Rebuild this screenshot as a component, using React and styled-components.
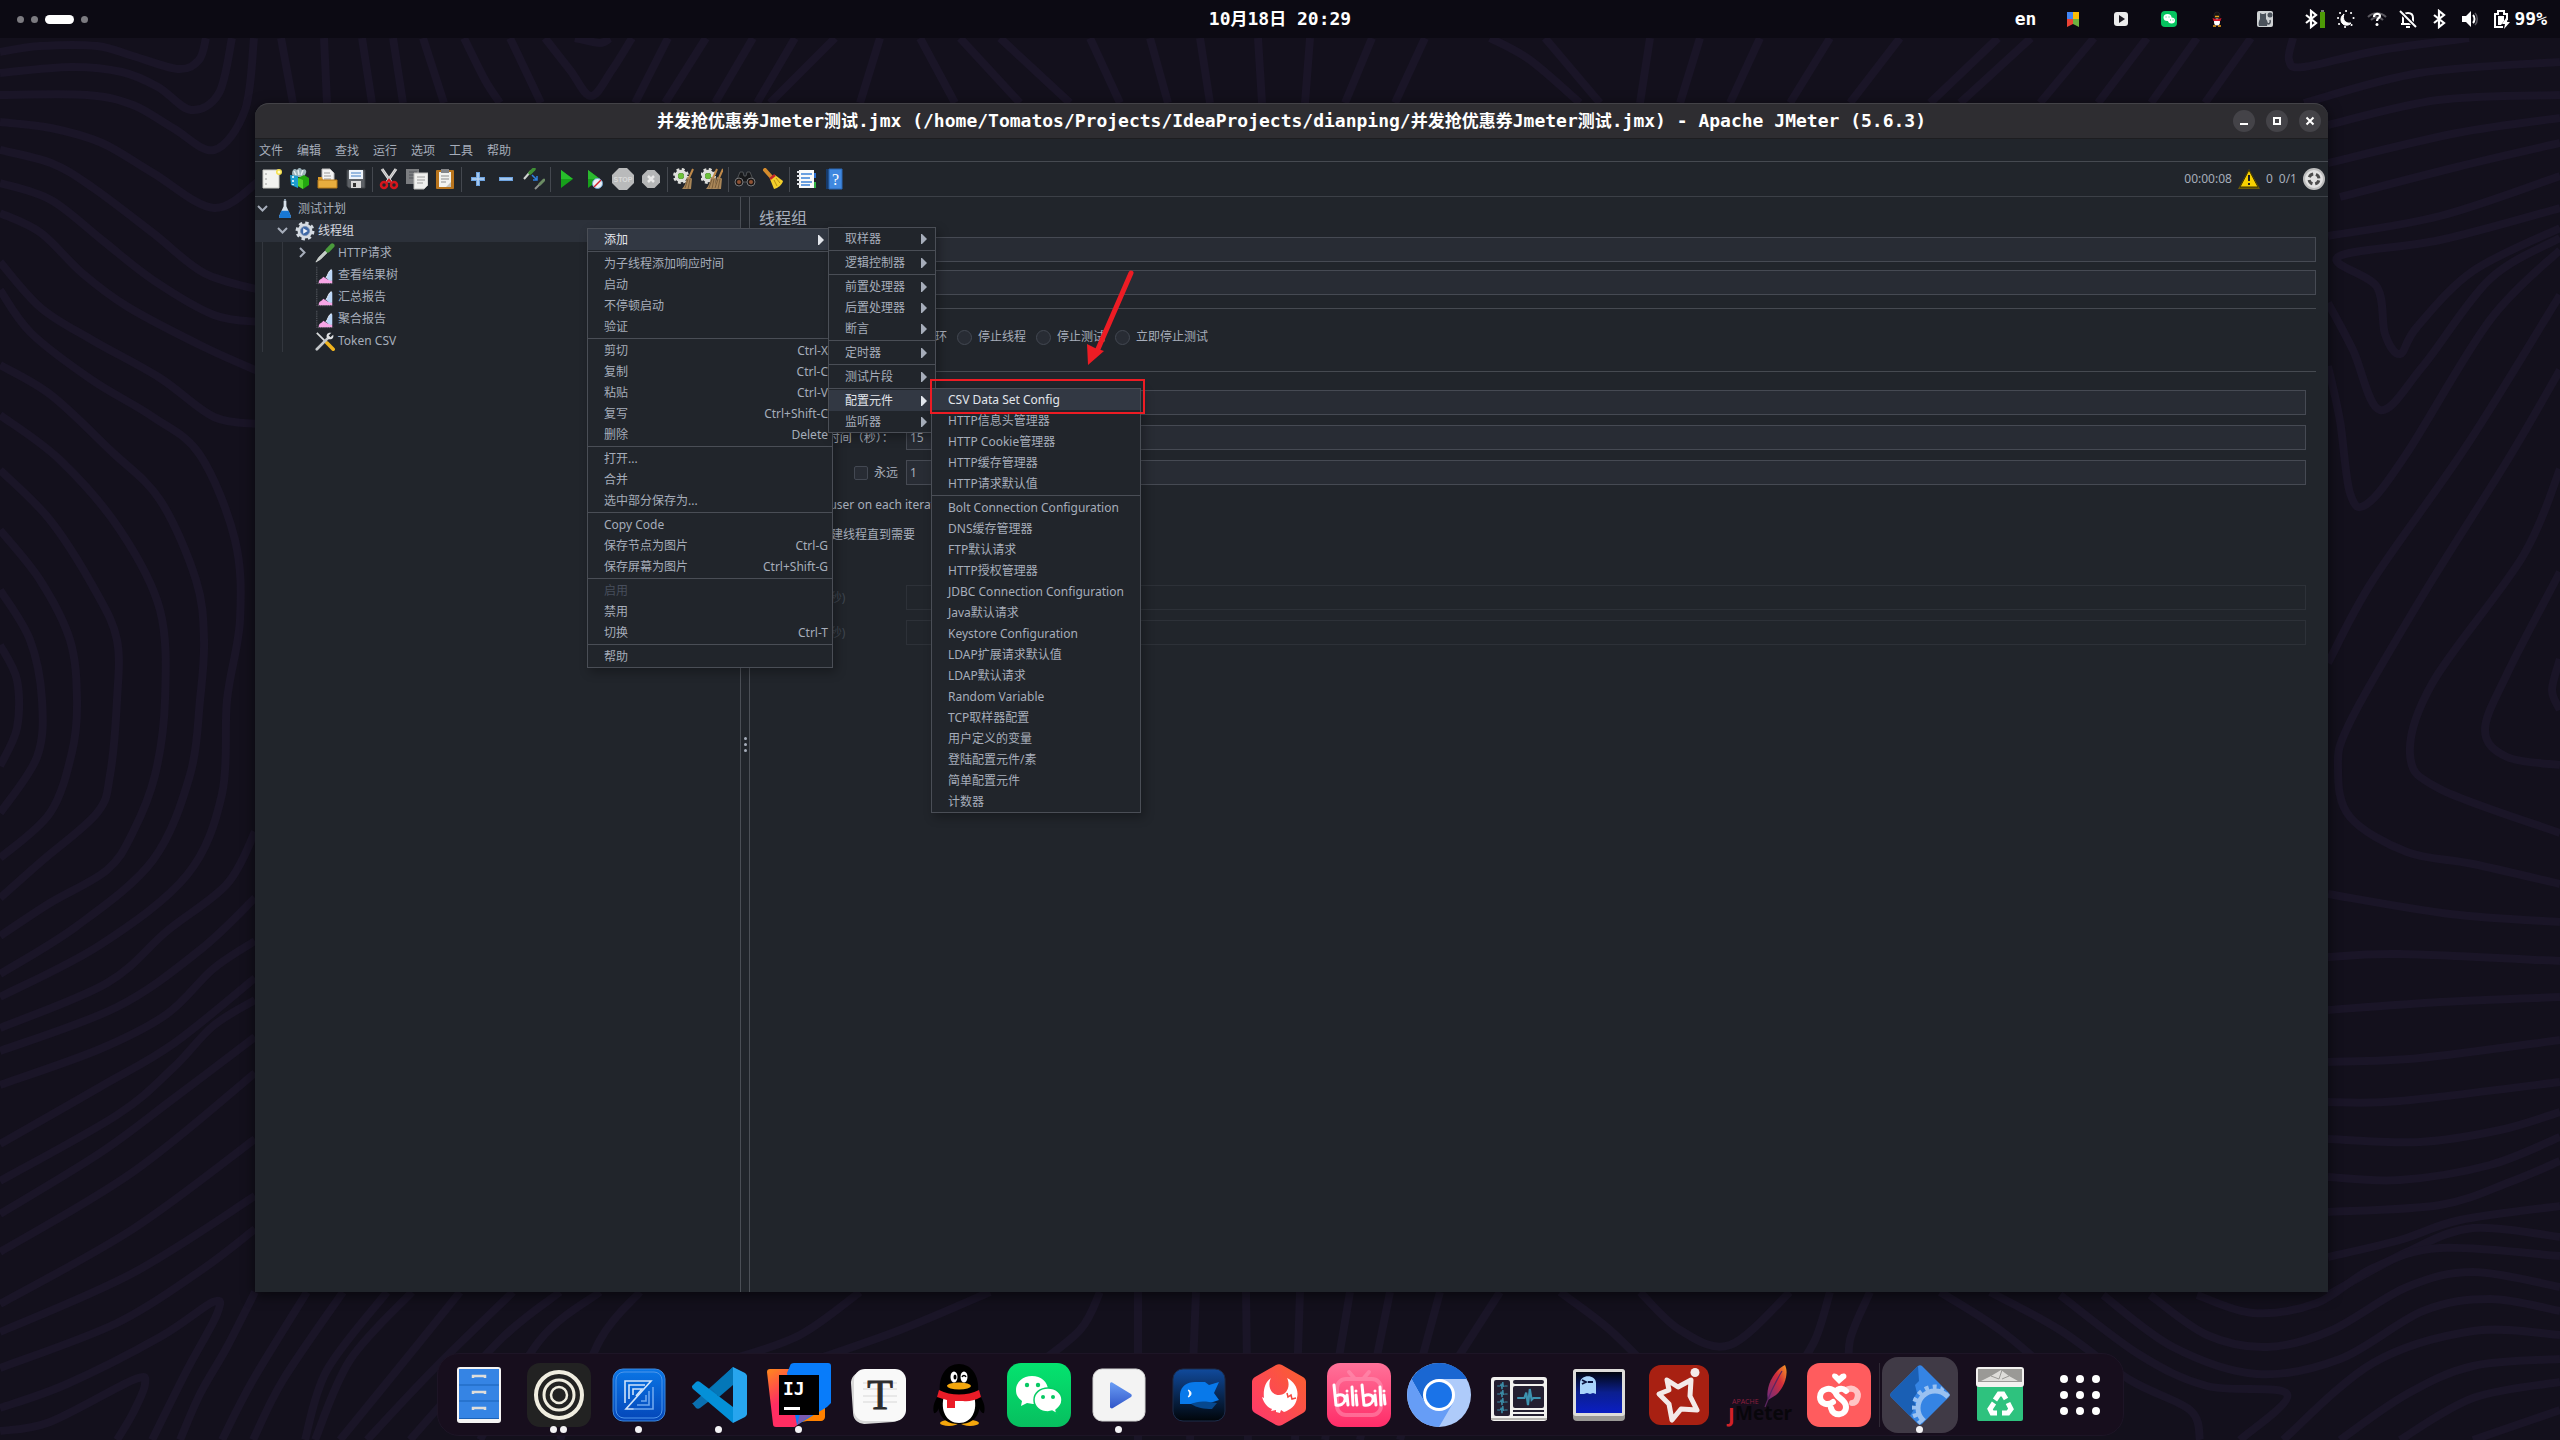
import React from 'react';
import styled, { createGlobalStyle, css } from 'styled-components';

const GlobalStyle = createGlobalStyle`
  * {
    box-sizing: border-box;
  }

  body {
    margin: 0;
    background: #13101c;
    color: #a6adba;
    font-family: "Noto Sans", "Noto Sans CJK SC", sans-serif;
    font-size: 12px;
    line-height: 20px;
  }

  ul {
    list-style: none;
    margin: 0;
    padding: 0;
  }

  button {
    font: inherit;
    color: inherit;
    background: none;
    border: none;
    padding: 0;
  }
`;

const mono = css`
  font-family: "DejaVu Sans Mono", "Noto Sans CJK SC", monospace;
  font-size: 18px;
  font-weight: bold;
  color: #fff;
`;

/* ---------- desktop ---------- */

const Desktop = styled.div`
  position: relative;
  display: flex;
  flex-direction: column;
  min-height: 100vh;
`;

const Wallpaper = styled.svg`
  position: absolute;
  inset: 0;
  width: 100%;
  height: 100%;
  z-index: -1;
`;

const waves = [
  [0, 52, 40, 46, 97, 46, 133, 56, 178, 69, 199, 60, 206, 38],
  [0, 73, 71, 67, 122, 72, 158, 87, 191, 110, 219, 93, 232, 38],
  [0, 95, 87, 95, 133, 105, 173, 128, 214, 150, 245, 110, 254, 38],
  [0, 122, 51, 128, 102, 143, 153, 173, 214, 208, 260, 180],
  [0, 150, 51, 163, 92, 187, 153, 233, 204, 273, 260, 290],
  [0, 183, 51, 200, 102, 240, 153, 280, 214, 315, 260, 322],
  [0, 213, 41, 233, 82, 273, 128, 307, 204, 347, 260, 372],
  [0, 262, 41, 308, 92, 340, 160, 378, 214, 417, 260, 424],
  [0, 290, 31, 333, 92, 380, 153, 417, 200, 455, 235, 540, 240, 620, 227, 700, 222, 794, 187, 875, 100, 945, 0, 997],
  [0, 365, 51, 395, 110, 450, 160, 500, 196, 580, 204, 640, 200, 700, 190, 775, 153, 860, 77, 926, 0, 974],
  [0, 415, 60, 460, 120, 530, 160, 610, 165, 700, 155, 775, 133, 832, 107, 870, 50, 903, 0, 936],
  [0, 470, 50, 520, 95, 590, 117, 640, 117, 700, 110, 775, 97, 813, 43, 860, 0, 898],
  [0, 530, 40, 580, 70, 640, 77, 700, 72, 752, 50, 813, 0, 858],
  [0, 590, 30, 640, 42, 700, 37, 757, 0, 813],
  [0, 645, 17, 680, 17, 728, 0, 766],
  [255, 832, 227, 884, 167, 931, 107, 983, 0, 1028],
  [255, 898, 200, 950, 117, 1007, 0, 1051],
  [255, 941, 213, 969, 167, 1014, 100, 1049, 0, 1085],
  [255, 978, 173, 1044, 100, 1087, 0, 1144],
  [255, 1000, 213, 1026, 173, 1068, 117, 1115, 0, 1181],
  [255, 1037, 173, 1099, 100, 1153, 0, 1214],
  [255, 1073, 133, 1172, 0, 1252],
  [255, 1139, 133, 1229, 0, 1304],
  [255, 1196, 133, 1273, 0, 1332],
  [255, 1229, 200, 1271, 117, 1323, 0, 1368],
  [0, 1408, 67, 1384, 160, 1337, 213, 1302, 217, 1314, 187, 1370, 152, 1440],
  [0, 1431, 50, 1422, 133, 1380, 145, 1384, 133, 1413, 117, 1440],
  [255, 1292, 227, 1347, 200, 1394, 180, 1440],
  [307, 1292, 253, 1380, 222, 1440],
  [343, 1292, 283, 1380, 253, 1440],
  [387, 1292, 327, 1370, 305, 1440],
  [412, 1292, 350, 1360, 315, 1440],
  [460, 1292, 393, 1375, 340, 1440],
  [513, 1292, 433, 1370, 367, 1440],
  [560, 1292, 500, 1340, 410, 1440],
  [600, 1292, 540, 1340, 480, 1440],
  [640, 1292, 600, 1340, 560, 1440],
  [860, 1292, 800, 1335, 730, 1360],
  [990, 1292, 900, 1330, 800, 1365],
  [1100, 1292, 1080, 1330, 1030, 1370],
  [1138, 1292, 1138, 1440],
  [1196, 1292, 1190, 1440],
  [1246, 1292, 1248, 1440],
  [1300, 1292, 1295, 1440],
  [1350, 1292, 1325, 1440],
  [1390, 1292, 1360, 1440],
  [1440, 1292, 1400, 1440],
  [1500, 1292, 1450, 1370],
  [1560, 1292, 1610, 1330, 1660, 1380],
  [1640, 1292, 1680, 1330, 1730, 1345, 1790, 1292],
  [1830, 1292, 1815, 1340, 1790, 1380],
  [1870, 1292, 1850, 1340, 1850, 1380],
  [1940, 1292, 2000, 1330, 2060, 1380],
  [1990, 1292, 2060, 1330, 2130, 1380, 2190, 1410, 2200, 1440],
  [2328, 236, 2440, 216, 2560, 176],
  [2560, 208, 2440, 240, 2338, 257, 2377, 287, 2385, 334, 2400, 354, 2417, 327, 2473, 271, 2560, 228],
  [2328, 303, 2353, 350, 2380, 410, 2423, 366, 2490, 279, 2560, 238],
  [2328, 366, 2340, 421, 2350, 493, 2367, 504, 2407, 453, 2490, 320, 2560, 250],
  [2328, 663, 2373, 580, 2467, 445, 2560, 295],
  [2560, 370, 2507, 461, 2423, 595, 2350, 722, 2338, 769, 2350, 817, 2407, 852, 2473, 864, 2560, 884],
  [2560, 469, 2523, 556, 2433, 682, 2410, 754, 2440, 789, 2560, 833],
  [2560, 572, 2507, 674, 2485, 730, 2507, 757, 2560, 765],
  [2560, 659, 2552, 690, 2560, 710],
  [2328, 894, 2450, 914, 2560, 922],
  [2328, 957, 2400, 954, 2560, 961],
  [2328, 1010, 2440, 1002, 2560, 997],
  [2328, 1062, 2420, 1058, 2560, 1040],
  [2328, 1102, 2400, 1101, 2560, 1082],
  [2328, 1139, 2420, 1142, 2500, 1130, 2560, 1112],
  [2328, 1177, 2400, 1180, 2490, 1165, 2560, 1137],
  [2328, 1212, 2440, 1205, 2510, 1182, 2560, 1161],
  [2328, 1257, 2400, 1240, 2460, 1220, 2560, 1206],
  [2328, 1295, 2407, 1252, 2473, 1228, 2560, 1237],
  [2197, 1295, 2253, 1313, 2317, 1303, 2373, 1268, 2440, 1248, 2560, 1256],
  [2150, 1295, 2207, 1335, 2267, 1347, 2330, 1331, 2407, 1287, 2473, 1272, 2560, 1287],
  [2103, 1295, 2173, 1347, 2257, 1374, 2340, 1359, 2423, 1311, 2490, 1299, 2560, 1311],
  [2060, 1295, 2140, 1355, 2207, 1386, 2287, 1394, 2240, 1440],
  [2283, 1440, 2373, 1363, 2473, 1331, 2560, 1335],
  [2340, 1440, 2407, 1394, 2473, 1366, 2560, 1359],
  [2400, 1440, 2473, 1398, 2560, 1382],
  [2473, 1440, 2560, 1410],
  [2293, 38, 2289, 60, 2304, 67, 2381, 50, 2469, 38],
  [2304, 103, 2419, 73, 2560, 62],
  [2328, 125, 2438, 100, 2560, 95],
  [2328, 163, 2457, 133, 2560, 118],
  [2340, 197, 2457, 167, 2560, 143],
  [281, 38, 293, 103], [324, 38, 327, 103], [362, 38, 372, 103], [393, 38, 403, 103],
  [423, 38, 444, 103], [464, 38, 485, 80, 500, 103], [510, 38, 541, 103],
  [545, 38, 570, 70, 591, 96, 612, 70, 632, 38],
  [575, 38, 600, 43, 610, 38],
  [668, 38, 635, 103], [706, 38, 665, 103], [753, 38, 715, 103], [795, 38, 757, 103],
  [835, 38, 770, 103], [880, 38, 860, 103], [920, 38, 955, 103], [960, 38, 1020, 103],
  [1000, 38, 1070, 103], [1090, 38, 1120, 103], [1150, 38, 1168, 103], [1200, 38, 1210, 103],
  [1258, 38, 1262, 103], [1310, 38, 1305, 103], [1372, 38, 1345, 103], [1425, 38, 1395, 103],
  [1490, 38, 1530, 60, 1580, 103], [1545, 38, 1600, 103], [1650, 38, 1640, 103],
  [1700, 38, 1680, 103], [1760, 38, 1730, 103], [1830, 38, 1790, 103], [1900, 38, 1850, 103],
  [1998, 38, 1930, 103], [2031, 38, 1960, 103], [2094, 38, 2040, 103], [2147, 38, 2098, 103],
  [2197, 38, 2151, 103], [2251, 38, 2205, 103],
];

const smooth = (flat) => {
  const pts = [];
  for (let i = 0; i < flat.length; i += 2) pts.push([flat[i], flat[i + 1]]);
  let d = `M${pts[0]}`;
  for (let i = 0; i < pts.length - 1; i += 1) {
    const a = pts[i - 1] || pts[i];
    const b = pts[i];
    const c = pts[i + 1];
    const e = pts[i + 2] || c;
    d += `C${b[0] + (c[0] - a[0]) / 6} ${b[1] + (c[1] - a[1]) / 6} ${c[0] - (e[0] - b[0]) / 6} ${c[1] - (e[1] - b[1]) / 6} ${c}`;
  }
  return d;
};

/* ---------- top bar ---------- */

const TopBar = styled.header`
  ${mono}
  display: grid;
  grid-template-columns: 1fr auto 1fr;
  align-items: center;
  height: 38px;
  background: #0c0a13;
`;

const Workspaces = styled.div`
  display: flex;
  align-items: center;
  gap: 7px;
  padding-left: 17px;
`;

const Workspace = styled.button`
  width: ${props => (props.$active ? 29 : 7)}px;
  height: ${props => (props.$active ? 9 : 7)}px;
  border-radius: 5px;
  background: ${props => (props.$active ? '#fff' : '#7c7b80')};
`;

const Tray = styled.div`
  display: flex;
  align-items: center;
  justify-content: flex-end;
  padding-right: 13px;
`;

const TrayCell = styled.button`
  display: flex;
  align-items: center;
  justify-content: center;
  width: ${props => (props.$wide ? 48 : 31)}px;
  height: 38px;

  svg {
    display: block;
  }
`;

const TrayGroup = styled.div`
  display: flex;
  margin-left: 10px;
`;

const Battery = styled.div`
  display: flex;
  align-items: center;
  gap: 3px;
  margin-left: 8px;
`;

/* ---------- window ---------- */

const Window = styled.main`
  position: relative;
  flex: 1;
  display: flex;
  flex-direction: column;
  margin: 65px 232px 61px 255px;
  background: #21252b;
  border-radius: 14px 14px 0 0;
  box-shadow: 0 3px 14px rgba(0, 0, 0, 0.6);
`;

const TitleBar = styled.div`
  display: grid;
  grid-template-columns: 1fr auto 1fr;
  align-items: center;
  height: 36px;
  background: #2e2d31;
  border-top: 1px solid #434247;
  border-bottom: 1px solid #1d1d20;
  border-radius: 14px 14px 0 0;
`;

const Title = styled.h1`
  ${mono}
  grid-column: 2;
  margin: 0;
  line-height: 24px;
  white-space: pre;
`;

const Han = styled.span`
  font-size: 17px;
`;

const WindowButtons = styled.div`
  display: flex;
  justify-content: flex-end;
  gap: 11px;
  padding-right: 7px;
`;

const RoundButton = styled.button`
  width: 22px;
  height: 22px;
  border-radius: 50%;
  background: #444348;

  svg {
    display: block;
  }
`;

const MenuBar = styled.nav`
  display: flex;
  gap: 14px;
  height: 23px;
  padding: 1px 4px 0;
  border-bottom: 1px solid #464a51;
`;

const ToolBar = styled.div`
  display: flex;
  align-items: center;
  height: 35px;
  padding: 0 3px;
  border-bottom: 1px solid #3c4047;
`;

const ToolButton = styled.button`
  display: flex;
  justify-content: center;
  width: 28px;

  svg {
    display: block;
  }
`;

const ToolSeparator = styled.span`
  width: 1px;
  height: 25px;
  margin: 0 2px;
  background: #44484f;
`;

const Counters = styled.div`
  display: flex;
  align-items: center;
  gap: 6px;
  margin-left: auto;

  svg {
    display: block;
  }
`;

const Body = styled.div`
  flex: 1;
  display: flex;
`;

/* ---------- tree ---------- */

const Tree = styled.ul`
  flex: 0 0 486px;
  padding-top: 1px;
  border-right: 1px solid #4a4e55;
`;

const TreeRow = styled.div`
  display: flex;
  align-items: center;
  height: 22px;
  padding-left: ${props => props.$level * 20}px;
  background: ${props => (props.$selected ? '#2c313a' : 'none')};
  color: ${props => (props.$selected ? '#d7dae0' : 'inherit')};

  > svg {
    margin-right: 3px;
  }
`;

const Toggle = styled.button`
  width: 20px;
  height: 20px;

  svg {
    display: block;
  }
`;

const Branch = styled.ul`
  background: linear-gradient(#33373e, #33373e) ${props => props.$level * 20 + 7}px 0 / 1px 100% no-repeat;
`;

const Splitter = styled.div`
  display: flex;
  flex-direction: column;
  align-items: center;
  justify-content: center;
  gap: 3px;
  width: 8px;
`;

const Grip = styled.span`
  width: 3px;
  height: 3px;
  border-radius: 50%;
  background: #a6adba;
`;

/* ---------- form ---------- */

const Pane = styled.section`
  flex: 1;
  padding: 9px 12px 0 9px;
  border-left: 1px solid #4a4e55;
`;

const PaneTitle = styled.h2`
  margin: 0 0 7px;
  font-size: 16px;
  font-weight: normal;
  line-height: 24px;
`;

const Group = styled.section`
  margin-top: ${props => (props.$first ? 13 : 0)}px;
  padding: 18px 10px ${props => (props.$first ? 24 : 18)}px 16px;
  border-top: 1px solid #464a51;
`;

const Rows = styled.div`
  display: flex;
  flex-direction: column;
  gap: ${props => (props.$tight ? 8 : 10)}px;
`;

const Row = styled.div`
  display: flex;
  align-items: center;
  gap: 8px;
`;

const FieldLabel = styled.label`
  flex: 0 0 ${props => (props.$short ? 40 : 123)}px;
  white-space: nowrap;
  color: ${props => (props.$disabled ? '#3f4550' : 'inherit')};
`;

const LoopLabel = styled.div`
  flex: 0 0 123px;
  display: flex;
  justify-content: space-between;
`;

const Field = styled.input`
  flex: 1;
  height: 25px;
  padding: 0 3px;
  font: inherit;
  color: inherit;
  background: #282c34;
  border: 1px solid #464a53;
  outline: none;

  &:disabled {
    background: #21252b;
    border-color: #2d3138;
  }
`;

const Choices = styled.div`
  display: flex;
  gap: 10px;
`;

const Choice = styled.label`
  display: flex;
  align-items: center;
  gap: 6px;
  height: 20px;
  white-space: nowrap;
`;

const Mark = styled.input`
  appearance: none;
  width: ${props => (props.type === 'radio' ? 15 : 14)}px;
  height: ${props => (props.type === 'radio' ? 15 : 14)}px;
  margin: 0;
  background: #282c34;
  border: 1px solid #434852;
  border-radius: ${props => (props.type === 'radio' ? '50%' : '2px')};
`;

/* ---------- menus ---------- */

const MenuList = styled.ul`
  position: absolute;
  z-index: 2;
  left: ${props => (props.$root ? '332px' : 'calc(100% - 4px)')};
  top: ${props => (props.$root ? '125px' : '-2px')};
  width: ${props => props.$width}px;
  background: #21252b;
  border: 1px solid #4a4e56;
  box-shadow: 3px 4px 10px rgba(0, 0, 0, 0.3);
`;

const MenuItem = styled.li`
  position: relative;
`;

const MenuButton = styled.button`
  display: flex;
  align-items: center;
  justify-content: space-between;
  width: 100%;
  height: 21px;
  padding: 0 ${props => (props.$submenu ? 8 : 4)}px 0 16px;
  white-space: nowrap;
  background: ${props => (props.$active ? '#323843' : 'none')};
  color: ${props => (props.$active ? '#e3e6ec' : '#a6adba')};

  &:disabled {
    color: #474e5c;
  }
`;

const MenuLine = styled.li`
  height: 3px;
  padding: 1px 0;
  background: #4a4e56 content-box;
`;

const Annotation = styled.svg`
  position: absolute;
  z-index: 3;
  left: 670px;
  top: 165px;
  pointer-events: none;
`;

/* ---------- dock ---------- */

const DockBar = styled.nav`
  align-self: center;
  display: flex;
  align-items: center;
  height: 83px;
  margin-bottom: 4px;
  padding: 0 3px 0 1px;
  background: #170e1d;
  border: 1px solid #1d1526;
  border-radius: 22px;
`;

const DockButton = styled.button`
  position: relative;
  display: flex;
  align-items: center;
  justify-content: center;
  width: 76px;
  height: 76px;
  margin: 0 2px;
  border-radius: 16px;
  background: ${props => (props.$active ? '#403a46' : 'none')};

  svg {
    display: block;
    overflow: visible;
  }
`;

const DockSeparator = styled.span`
  width: 1px;
  height: 64px;
  background: #2f2835;
`;

const Dots = styled.span`
  position: absolute;
  left: 0;
  right: 0;
  bottom: 0;
  display: flex;
  justify-content: center;
  gap: 3px;
`;

const Dot = styled.span`
  width: 7px;
  height: 7px;
  border-radius: 50%;
  background: #f4f3f5;
`;

/* ---------- icons ---------- */

const Icon = ({ size = 22, children }) => (
  <svg width={size} height={size} viewBox="0 0 22 22" fill="none" aria-hidden="true">{children}</svg>
);

const Gear = ({ cx, cy, r, fill }) => (
  <g>
    <circle cx={cx} cy={cy} r={r} stroke={fill} strokeWidth={r * 0.45} strokeDasharray={`${r * 0.42} ${r * 0.365}`} />
    <circle cx={cx} cy={cy} r={r * 0.72} stroke={fill} strokeWidth={r * 0.5} />
  </g>
);

const Broom = ({ x }) => (
  <g transform={`translate(${x} 0)`}>
    <path d="M19 1l-4 9" stroke="#c08a4a" strokeWidth="2" />
    <path d="M13 9l5 1.500-1 10.500h-9c3-3 4-7 5-12z" fill="#a98658" />
    <path d="M14 11l-3 9M16 11l-2 10" stroke="#6f5433" strokeWidth=".8" />
  </g>
);

const toolIcons = {
  '新建': (
    <Icon>
      <path d="M2 2h16v18H2z" fill="#f3f3f0" stroke="#c9c9c4" />
      <path d="M5 6v.1M5 11v.1M5 16v.1" stroke="#888" strokeWidth="1.500" strokeLinecap="round" />
      <circle cx="18" cy="4" r="3" fill="#f5e04d" />
      <circle cx="18" cy="4" r="1.500" fill="#fffbd0" />
    </Icon>
  ),
  '模板': (
    <Icon>
      <path d="M3 6c0-5 3-6 5-4 2-3 4-2 5 0 3-2 5 0 4 3l-2 4H4z" fill="#9eb4bc" />
      <path d="M5 3l2 4M9 2l1 5M14 2l-2 5" stroke="#e4edf0" strokeWidth="1.500" />
      <path d="M1 7l8 1v12l-7-3z" fill="#1e9ed1" />
      <path d="M4 8v9" stroke="#fff" strokeWidth="1.500" strokeDasharray="2 2" />
      <path d="M9 10l6-3 5 3v7l-6 4-5-3z" fill="#22a80f" />
      <path d="M9 10l5 2v9l-5-3z" fill="#51d02c" />
    </Icon>
  ),
  '打开': (
    <Icon>
      <path d="M5 1h8l4 4v9H5z" fill="#f4f4f4" stroke="#bbb" />
      <path d="M7 5h6M7 8h7M7 11h7" stroke="#999" />
      <path d="M1 9h4l1 3h14v8H1z" fill="#d9992a" />
      <path d="M1 12h19v8H1z" fill="#e8ad3e" stroke="#b87b18" />
    </Icon>
  ),
  '保存': (
    <Icon>
      <path d="M2 2h18v18H4l-2-2z" fill="#5d6166" stroke="#3d4045" />
      <path d="M4 2h14v9H4z" fill="#eef4fb" />
      <path d="M6 5h10M6 8h10" stroke="#7ba5d8" strokeWidth="1.500" />
      <path d="M6 13h10v7H6z" fill="#d9d9d9" />
      <path d="M8 15h3v4H8z" fill="#333" />
    </Icon>
  ),
  '剪切': (
    <Icon>
      <path d="M4 1l9 13M18 1L9 14" stroke="#dedede" strokeWidth="3" />
      <path d="M4 1l9 13M18 1L9 14" stroke="#a4a4a4" strokeWidth=".7" />
      <circle cx="6" cy="17" r="3" stroke="#d4161c" strokeWidth="2.500" />
      <circle cx="16" cy="17" r="3" stroke="#d4161c" strokeWidth="2.500" />
      <path d="M9 14l2-2 2 2" stroke="#d4161c" strokeWidth="2" />
    </Icon>
  ),
  '复制': (
    <Icon>
      <path d="M0 1h13v15H0z" fill="#7b7d80" />
      <path d="M3 4h8M3 7h5M3 10h5" stroke="#55575a" />
      <path d="M8 5h14v12l-4 4H8z" fill="#f0f0ee" stroke="#bdbdbb" />
      <path d="M11 9h8M11 12h8M11 15h6" stroke="#9c9c9c" />
    </Icon>
  ),
  '粘贴': (
    <Icon>
      <rect x="2" y="2" width="18" height="19" rx="1" fill="#b8741d" />
      <path d="M5 4h12v15H5z" fill="#f2f2ef" />
      <path d="M7 1h8v4H7z" fill="#84868a" />
      <path d="M7 8h8M7 11h8M7 14h5" stroke="#8d8d8d" />
      <path d="M12 19l5-5v5z" fill="#c4c4c0" />
    </Icon>
  ),
  '展开': <Icon><path d="M11 4v14M4 11h14" stroke="#6ea3e0" strokeWidth="4" /><path d="M11 5v12M5 11h12" stroke="#b7d3f2" strokeWidth="1.500" /></Icon>,
  '收起': <Icon><path d="M4 11h14" stroke="#6ea3e0" strokeWidth="4" /><path d="M5 11h12" stroke="#b7d3f2" strokeWidth="1.500" /></Icon>,
  '切换': (
    <Icon>
      <path d="M1 11l7-8" stroke="#cfd3cf" strokeWidth="2" />
      <path d="M7 5l4-4" stroke="#3f8f35" strokeWidth="3.500" strokeLinecap="round" />
      <path d="M9 7l5 5M14 8v4h-4" stroke="#2f7fe0" strokeWidth="1.500" />
      <path d="M12 21l5-5" stroke="#8e928e" strokeWidth="2" />
      <path d="M17 16l4-4" stroke="#6c8c64" strokeWidth="3" strokeLinecap="round" />
    </Icon>
  ),
  '启动': <Icon><path d="M5 2l12 9-12 9z" fill="#17a01b" /><path d="M5 2l12 9H5z" fill="#27bf2b" /></Icon>,
  '不停顿启动': (
    <Icon>
      <path d="M4 2l12 9-12 9z" fill="#17a01b" />
      <path d="M4 2l12 9H4z" fill="#2bb92f" />
      <circle cx="13.500" cy="15.500" r="5" fill="#e9f0f6" stroke="#6fa3cf" />
      <path d="M10 19l7-7" stroke="#d2232a" strokeWidth="1.500" />
    </Icon>
  ),
  '停止': (
    <Icon>
      <path d="M7 0h8l7 7v8l-7 7H7l-7-7V7z" fill="#b9babb" />
      <text x="11" y="14" textAnchor="middle" fontSize="7" fontWeight="bold" fontFamily="Liberation Sans" fill="#dadada">STOP</text>
    </Icon>
  ),
  '关闭': (
    <Icon>
      <path d="M7.500 2h7L20 7.500v7L14.500 20h-7L2 14.500v-7z" fill="#b5b6b7" />
      <path d="M8 8l6 6M14 8l-6 6" stroke="#e8e8e8" strokeWidth="2.500" />
    </Icon>
  ),
  '清除': <Icon><Gear cx={8} cy={8} r={6.5} fill="#dedfdc" /><circle cx="8" cy="8" r="3" fill="#6cc13b" /><Broom x={1} /></Icon>,
  '清除全部': <Icon><Gear cx={7} cy={8} r={6.5} fill="#dedfdc" /><circle cx="7" cy="8" r="3" fill="#6cc13b" /><Broom x={-3} /><Broom x={3} /></Icon>,
  '搜索': (
    <Icon>
      <path d="M6 4h3l1 4h2l1-4h3l4 10H2z" fill="#17181a" stroke="#5c5e61" strokeWidth=".8" />
      <circle cx="5" cy="14" r="4" fill="#1c1715" stroke="#77797c" />
      <circle cx="17" cy="14" r="4" fill="#1c1715" stroke="#77797c" />
      <circle cx="5" cy="14" r="2" fill="#8f5234" />
      <circle cx="17" cy="14" r="2" fill="#8f5234" />
    </Icon>
  ),
  '重置搜索': (
    <Icon>
      <path d="M3 2l8 9" stroke="#d58b2c" strokeWidth="4" strokeLinecap="round" />
      <path d="M8 11l5-4 8 6c-1 4-5 7-9 8z" fill="#f3cf2b" />
      <path d="M8 11l5-4" stroke="#c4262a" strokeWidth="2.500" />
      <path d="M12 12l3 6M14 10l4 5" stroke="#b98f12" />
    </Icon>
  ),
  '函数助手': (
    <Icon>
      <path d="M4 2h15v18H4z" fill="#fafafa" />
      <path d="M2 4h3M2 8h3M2 12h3M2 16h3" stroke="#dfe2e6" strokeWidth="2" />
      <path d="M6 6h11M6 10h9M6 14h11M6 17h9" stroke="#3d82d8" strokeWidth="1.500" />
      <path d="M19 5h2v5h-2z" fill="#2b6fd0" />
      <path d="M19 14h2v6h-2z" fill="#2fb344" />
    </Icon>
  ),
  '帮助': (
    <Icon>
      <path d="M3 1h3v20H3z" fill="#163a6b" />
      <path d="M6 1h13v20H6z" fill="#4088df" stroke="#2b66b3" />
      <text x="12.500" y="17" textAnchor="middle" fontSize="16" fontFamily="Liberation Serif" fill="#fff">?</text>
    </Icon>
  ),
};

const toolGroups = [
  ['新建', '模板', '打开', '保存'],
  ['剪切', '复制', '粘贴'],
  ['展开', '收起', '切换'],
  ['启动', '不停顿启动', '停止', '关闭'],
  ['清除', '清除全部'],
  ['搜索', '重置搜索'],
  ['函数助手', '帮助'],
];

const Chevron = ({ open }) => (
  <svg width="20" height="20" viewBox="0 0 20 20" fill="none" stroke="#a6adba" strokeWidth="2">
    <path d={open ? 'M3 7l4.500 4.500L12 7' : 'M5 5l4.500 4.500L5 14'} />
  </svg>
);

const treeIcons = {
  flask: (
    <Icon size={20}>
      <path d="M11 0v2" stroke="#8fa3b5" strokeWidth="2" />
      <path d="M9.500 2h3v6l5 11c0 2-1 2-2 2h-9c-1 0-2 0-2-2l5-11z" fill="#d7e1ea" />
      <path d="M7 13h8l2.500 6c0 2-1 2-2 2h-9c-1 0-2 0-2-2z" fill="#1877d3" />
    </Icon>
  ),
  gear: (
    <Icon size={20}>
      <Gear cx={11} cy={11} r={8.5} fill="#d5dbe2" />
      <circle cx="11" cy="11" r="5" fill="#3f68a6" stroke="#7c93b5" />
      <path d="M9 8l5 3-5 3z" fill="#eef3fa" />
    </Icon>
  ),
  dropper: (
    <Icon size={20}>
      <path d="M1 21l3-5L13 7l2 2-9 9z" fill="#c3cac6" stroke="#eef1ee" strokeWidth=".7" />
      <path d="M12 7l3 3" stroke="#1f2a1f" strokeWidth="2.500" />
      <path d="M14 8l5-5" stroke="#4a9a3c" strokeWidth="5" strokeLinecap="round" />
    </Icon>
  ),
  chart: (
    <Icon size={20}>
      <path d="M2 2v18.500h18" stroke="#6d7178" strokeDasharray="1 1" />
      <path d="M4 20c0-5 4-4 5-7l5 3 5 1v3z" fill="#f7a6e6" />
      <path d="M12 14c2-2 3-8 6-9l1 1v11c-3 1-5-1-7-3z" fill="#bcd6f7" />
      <path d="M12 14c2-2 3-8 6-9" stroke="#eef5ff" />
    </Icon>
  ),
  tools: (
    <Icon size={20}>
      <path d="M2 2l11 11" stroke="#d9dbdd" strokeWidth="2" />
      <path d="M13 13l7 7" stroke="#f0b41e" strokeWidth="4" strokeLinecap="round" />
      <path d="M2 20L15 7" stroke="#c4c7ca" strokeWidth="3" strokeLinecap="round" />
      <path d="M20 4l-3 3-2-2 3-3c-4-1-6 2-5 5l2 2c4 1 6-2 5-5z" fill="#dfe1e3" />
    </Icon>
  ),
};

const Bluetooth = () => (
  <path d="M2 6l10 8-5 4V2l5 4-10 8" stroke="#fff" strokeWidth="2.200" />
);

const TraySvg = ({ w = 18, children }) => (
  <svg width={w} height="20" viewBox={`0 0 ${w} 20`} fill="none" aria-hidden="true">{children}</svg>
);

const tray = [
  <TraySvg>
    <path d="M3 3h6v7H3z" fill="#4285f4" />
    <path d="M9 3h6v7H9z" fill="#fbbc05" />
    <path d="M3 10h6v5l-6 3z" fill="#ea4335" />
    <path d="M9 10h6v8l-6-3z" fill="#6cb33f" />
  </TraySvg>,
  <TraySvg>
    <rect x="2" y="3" width="14" height="14" rx="3" fill="#ececec" />
    <path d="M7 6l6 4-6 4z" fill="#1d1a22" />
  </TraySvg>,
  <TraySvg>
    <rect x="1" y="2" width="16" height="16" rx="4" fill="#06c45f" />
    <ellipse cx="7.500" cy="8.500" rx="4" ry="3.500" fill="#fff" />
    <ellipse cx="11.500" cy="11.500" rx="3.500" ry="3" fill="#fff" />
    <path d="M6 8h.1M9 8h.1M10.500 11h.1M13 11h.1" stroke="#06c45f" strokeLinecap="round" />
  </TraySvg>,
  <TraySvg>
    <ellipse cx="9" cy="6.500" rx="3" ry="3.500" fill="#141414" stroke="#3a3530" strokeWidth=".5" />
    <path d="M7 7.500h4" stroke="#f0a11c" strokeWidth="1.500" />
    <ellipse cx="9" cy="13" rx="3" ry="3.500" fill="#fff" />
    <path d="M4.500 9c3 1.500 6 1.500 9 0l-1 3H5.500z" fill="#d3172a" />
    <path d="M5 17h3M10 17h3" stroke="#eca11d" strokeWidth="1.500" />
  </TraySvg>,
  <TraySvg>
    <rect x="1" y="2" width="16" height="16" rx="2" fill="#cfd2d4" />
    <path d="M4 4l2 1h2l2-1v6c2 2 2 5 1 7H3c-1-3 0-5 1-7z" fill="#4b525b" />
    <circle cx="14" cy="6" r="2.500" fill="#4b525b" />
    <path d="M11 14c2 2 4 0 3-3" stroke="#4b525b" strokeWidth="1.500" />
  </TraySvg>,
];

const status = [
  <TraySvg w={22}>
    <Bluetooth />
    <path d="M16 3h5v16h-5z" fill="#4e9a06" />
    <path d="M17 1h3v2h-3z" fill="#777" />
  </TraySvg>,
  <TraySvg w={20}>
    <path d="M8 5c-2 5 1 10 7 9-2 3-7 3-9 0s-1-7 2-9z" fill="#fff" stroke="#fff" />
    <path d="M10 2h.1M15 4h.1M17.500 9h.1M4 4h.1M2 9h.1M3 15h.1M9 18h.1M15.500 16h.1" stroke="#fff" strokeWidth="2" strokeLinecap="round" />
  </TraySvg>,
  <TraySvg w={20}>
    <path d="M1 8c5-5 13-5 18 0M4 11c2-2 4-3 6-3s4 1 6 3" stroke="#5b5960" strokeWidth="2" />
    <path d="M7 8c0-4 6-4 6-1 0 2-3 2-3 5" stroke="#fff" strokeWidth="2.200" />
    <circle cx="10" cy="15.500" r="1.500" fill="#fff" />
  </TraySvg>,
  <TraySvg w={20}>
    <path d="M5 15V9c0-3 2-5 5-5s5 2 5 5v6M3 15h14M8 18h4" stroke="#fff" strokeWidth="2" />
    <path d="M2 2l16 16" stroke="#0c0a13" strokeWidth="4" />
    <path d="M2 2l16 16" stroke="#fff" strokeWidth="2" />
  </TraySvg>,
  <TraySvg w={14}><Bluetooth /></TraySvg>,
  <TraySvg w={18}>
    <path d="M1 7h4l5-5v16l-5-5H1z" fill="#fff" />
    <path d="M12 6c2 2 2 6 0 8" stroke="#fff" strokeWidth="2" />
    <path d="M14 4c3 3 3 9 0 12" stroke="#59575f" strokeWidth="1.500" />
  </TraySvg>,
];

const DockIcon = ({ children }) => (
  <svg width="64" height="64" viewBox="0 0 64 64" fill="none" aria-hidden="true">{children}</svg>
);

const Pulse = ({ x, y, s }) => (
  <path transform={`translate(${x} ${y}) scale(${s})`} d="M-6 0h4l1-3 1 7 1-9 1 6 1-1h4" stroke="#3d93b0" strokeWidth="1.200" />
);

const dockApps = [
  {
    name: 'Files',
    icon: (
      <DockIcon>
        <rect x="10" y="4" width="44" height="56" rx="3" fill="#f5f4f3" />
        <path d="M12 6h40v50H12z" fill="#3584e4" />
        <path d="M12 22h40M12 38h40M12 55.500h40" stroke="#1b62b8" />
        <path d="M26 15v-2h12v2M26 31v-2h12v2M26 47v-2h12v2" stroke="#deddda" strokeWidth="2.500" />
      </DockIcon>
    ),
  },
  {
    name: 'Rings',
    dots: 2,
    icon: (
      <DockIcon>
        <rect width="64" height="64" rx="13" fill="#222" />
        <g stroke="#f0ede0">
          <circle cx="32" cy="32" r="23" strokeWidth="4" />
          <circle cx="32" cy="32" r="15" strokeWidth="3" />
          <circle cx="32" cy="32" r="8" strokeWidth="2.500" />
        </g>
      </DockIcon>
    ),
  },
  {
    name: 'Zed',
    dots: 1,
    icon: (
      <DockIcon>
        <linearGradient id="zed" x2="0" y2="1"><stop stopColor="#0a76e6" /><stop offset="1" stopColor="#0446b8" /></linearGradient>
        <rect x="6" y="6" width="52" height="52" rx="10" fill="url(#zed)" stroke="#3b87dd" />
        <rect x="9" y="9" width="46" height="46" rx="8" stroke="#4f97ea" />
        <g stroke="#cfe4fb" strokeWidth="1.600">
          <path d="M18 40V18h26L19 46h8" />
          <path d="M22 36V22h16M26 32v-6h9L29 33" />
        </g>
        <g stroke="#6ea7ee" strokeWidth="1.600">
          <path d="M26 46h20V24M30 42h12V28M34 38h5v-6" />
        </g>
      </DockIcon>
    ),
  },
  {
    name: 'Code',
    dots: 1,
    icon: (
      <DockIcon>
        <path d="M5 40l4 5c1 1 3 1 4 0L46 20V4L6 40z" fill="#0a6fb0" />
        <path d="M46 4L24 25l8 9 14-12z" fill="#0477b8" />
        <path d="M5 23l4-4c1-1 3-1 4 0l33 25v16L6 26c-1-1-1-2-1-3z" fill="#0490d8" />
        <path d="M46 4l12 6c1 1 2 2 2 3v38c0 1-1 2-2 3l-12 6z" fill="#27a5ee" />
      </DockIcon>
    ),
  },
  {
    name: 'IntelliJ IDEA',
    dots: 1,
    icon: (
      <DockIcon>
        <linearGradient id="ij" x1="0" x2=".4" y2="1"><stop stopColor="#ff8a1c" /><stop offset=".6" stopColor="#ff2d62" /></linearGradient>
        <path d="M0 9c0-2 1-3 3-3h24l10 50-8 7c-1 1-2 1-3 1H9c-2 0-3-1-3-3z" fill="url(#ij)" />
        <path d="M58 40v14c0 2-2 4-4 4H40l-10 2z" fill="#ff8100" />
        <path d="M20 10l3-7c0-2 2-3 4-3h34c2 0 3 1 3 3v37l-4 4L30 62z" fill="#087cfa" />
        <path d="M30 62l22-15-16-8z" fill="#7a5bb0" />
        <path d="M12 12h40v40H12z" fill="#000" />
        <text x="16" y="32" fontFamily="DejaVu Sans Mono" fontWeight="bold" fontSize="18" fill="#fff">IJ</text>
        <path d="M17 45.500h16" stroke="#fff" strokeWidth="3" />
      </DockIcon>
    ),
  },
  {
    name: 'Typora',
    icon: (
      <DockIcon>
        <rect x="5" y="8" width="50" height="52" rx="11" fill="#d9d9d9" transform="rotate(-4 30 34)" />
        <rect x="7" y="6" width="52" height="52" rx="11" fill="#f9f9f9" />
        <path d="M16 20h34M16 26h34M16 33h34M16 39h34" stroke="#e2e2e2" strokeWidth="1.500" />
        <text x="33" y="46" textAnchor="middle" fontFamily="Liberation Serif" fontSize="42" fill="#2c2c2c" stroke="#2c2c2c">T</text>
      </DockIcon>
    ),
  },
  {
    name: 'QQ',
    icon: (
      <DockIcon>
        <path d="M13 30c-5 6-8 14-6 20 2 1 4-3 5-5M51 30c5 6 8 14 6 20-2 1-4-3-5-5" fill="#000" />
        <ellipse cx="22" cy="60" rx="9" ry="3" fill="#f5a70c" />
        <ellipse cx="43" cy="60" rx="9" ry="3" fill="#f5a70c" />
        <path d="M13 30C11 12 20 1 32 1s21 11 19 29c4 12 3 31-19 31S9 42 13 30z" fill="#000" />
        <path d="M17 33h30c4 14-2 27-15 27S13 47 17 33z" fill="#fff" />
        <ellipse cx="27" cy="14" rx="3.500" ry="5.500" fill="#fff" />
        <ellipse cx="37" cy="14" rx="3.500" ry="5.500" fill="#fff" />
        <ellipse cx="28" cy="14" rx="1.500" ry="2.500" fill="#000" />
        <path d="M35 14c1-2 3-2 4 0" stroke="#000" strokeWidth="1.500" />
        <ellipse cx="32" cy="23" rx="12" ry="3.500" fill="#f5a70c" />
        <path d="M12 27c12 6 28 6 40 0l2 7c-7 4-14 5-18 4H28v7h-8v-8c-4-1-7-2-10-3z" fill="#ea1c27" />
      </DockIcon>
    ),
  },
  {
    name: 'WeChat',
    icon: (
      <DockIcon>
        <linearGradient id="wx" x2="0" y2="1"><stop stopColor="#04e36f" /><stop offset="1" stopColor="#07bf5f" /></linearGradient>
        <rect width="64" height="64" rx="14" fill="url(#wx)" />
        <path d="M25 13c-9 0-16 6-16 14 0 5 2 8 6 11l-1 5 6-3 6 1c9-1 15-6 15-14s-7-14-16-14z" fill="#fff" />
        <path d="M41 25c-8 0-14 5-14 12s6 12 14 12l4-1 5 3-1-4c4-3 6-6 6-10 0-7-6-12-14-12z" fill="#fff" stroke="#06cc64" strokeWidth="1.500" />
        <g fill="#07c863">
          <circle cx="20" cy="22" r="2.200" /><circle cx="31" cy="22" r="2.200" />
          <circle cx="36" cy="34" r="2" /><circle cx="46" cy="34" r="2" />
        </g>
      </DockIcon>
    ),
  },
  {
    name: 'Player',
    dots: 1,
    icon: (
      <DockIcon>
        <linearGradient id="pl" x2="0" y2="1"><stop stopColor="#6a9df4" /><stop offset="1" stopColor="#3156c9" /></linearGradient>
        <rect x="6" y="6" width="52" height="52" rx="9" fill="#f3f3f3" stroke="#d5d5d5" />
        <path d="M23 21c0-2 2-2 3-1l18 11c1 1 1 2 0 3L26 45c-1 1-3 0-3-1z" fill="url(#pl)" />
      </DockIcon>
    ),
  },
  {
    name: 'Whale',
    icon: (
      <DockIcon>
        <linearGradient id="wh" x2="0" y2="1"><stop stopColor="#104a9c" /><stop offset="1" stopColor="#010509" /></linearGradient>
        <rect x="6" y="6" width="52" height="52" rx="10" fill="url(#wh)" stroke="#1c2c4a" />
        <path d="M13 41V31c1-8 7-12 15-12h10l4 3 10-3-5 11 5 7-9 3H32l-8 1z" fill="#0879ea" />
        <path d="M24 41c5-2 10-3 18-2l8 1-5 6c-8 0-15-1-21-5z" fill="#06488f" />
        <path d="M21 27c4 1 4 6 0 7 2-2 2-5 0-7z" fill="#fff" stroke="#fff" />
      </DockIcon>
    ),
  },
  {
    name: 'Fox',
    icon: (
      <DockIcon>
        <linearGradient id="fx" x1="1" x2="0" y2="1"><stop stopColor="#f9622b" /><stop offset="1" stopColor="#ff3670" /></linearGradient>
        <path d="M29 2c2-1 4-1 6 0l21 12c2 1 3 3 3 5v26c0 2-1 4-3 5L35 62c-2 1-4 1-6 0L8 50c-2-1-3-3-3-5V19c0-2 1-4 3-5z" fill="url(#fx)" />
        <path d="M24 15c-4 8 0 17 8 17s12-9 8-17c8 4 12 12 10 20-1 8-7 12-13 14l-3-2-1 3-4-1v-2l-5 1 1-2c-5-2-8-6-10-12l2 1c-1-8 1-16 7-20z" fill="#fff" />
        <path d="M40 30l1 4 3-2 1 4 4-1" stroke="#f5483e" strokeWidth="1.500" />
      </DockIcon>
    ),
  },
  {
    name: 'bilibili',
    icon: (
      <DockIcon>
        <linearGradient id="bl" x2="0" y2="1"><stop stopColor="#ff7299" /><stop offset="1" stopColor="#ff2c68" /></linearGradient>
        <rect width="64" height="64" rx="13" fill="url(#bl)" />
        <g stroke="#ff9cba" strokeWidth="4" strokeLinecap="round" opacity=".5">
          <rect x="10" y="16" width="44" height="36" rx="9" />
          <path d="M22 9l6 7M42 9l-6 7" />
        </g>
        <g stroke="#fff" strokeWidth="3" strokeLinecap="round">
          <path d="M7 22l2 20M9 33c6-3 10 0 9 4s-5 6-9 5M20 32l1 10M25 24l1 18M29 32l1 10" />
          <path d="M35 22l2 20M37 33c6-3 10 0 9 4s-5 6-9 5M48 32l1 10M53 24l1 18M57 32l1 9" />
        </g>
        <path d="M20 28v.1M29 28v.1M48 28v.1M57 28v.1" stroke="#fff" strokeWidth="3" strokeLinecap="round" />
      </DockIcon>
    ),
  },
  {
    name: 'Chromium',
    icon: (
      <DockIcon>
        <circle cx="32" cy="32" r="32" fill="#aecbfa" />
        <path d="M32 16H60A32 32 0 0 0 4.500 16L18 40z" fill="#1a67d2" />
        <path d="M4.500 16A32 32 0 0 0 32 64l14-24H18z" fill="#669df6" />
        <circle cx="32" cy="32" r="16" fill="#fff" />
        <circle cx="32" cy="32" r="13" fill="#1a73e8" />
      </DockIcon>
    ),
  },
  {
    name: 'System Monitor',
    icon: (
      <DockIcon>
        <rect x="4" y="14" width="56" height="44" rx="3" fill="#f2f1ef" />
        <path d="M4 56h56" stroke="#b9b7b3" strokeWidth="2" />
        <g fill="#241f31">
          <rect x="7" y="17" width="16" height="36" rx="2" />
          <rect x="26" y="17" width="31" height="4" rx="2" />
          <rect x="26" y="23" width="31" height="22" rx="2" />
          <path d="M26 47h31v2H26zM26 51h31v2H26z" />
        </g>
        <Pulse x={15} y={23} s={0.8} />
        <Pulse x={15} y={31} s={0.8} />
        <Pulse x={15} y={39} s={0.8} />
        <Pulse x={15} y={47} s={0.8} />
        <Pulse x={41} y={35} s={1.8} />
      </DockIcon>
    ),
  },
  {
    name: 'Ghostty',
    icon: (
      <DockIcon>
        <linearGradient id="gh" x2="0" y2="1"><stop stopColor="#02060f" /><stop offset=".5" stopColor="#0b1f8f" /><stop offset="1" stopColor="#0a1ec4" /></linearGradient>
        <rect x="6" y="6" width="52" height="52" rx="4" fill="#9a9996" />
        <rect x="6" y="6" width="52" height="47" rx="3" fill="#deddda" />
        <path d="M9 9h46v41H9z" fill="url(#gh)" />
        <path d="M13 31V20c0-9 16-9 16 0v11l-3-1-3 1-3-1-3 1z" fill="#a9d4fb" />
        <path d="M15 17l4 2-4 2M21 19h5" stroke="#0a1440" strokeWidth="1.800" />
      </DockIcon>
    ),
  },
  {
    name: 'RedStar',
    icon: (
      <DockIcon>
        <rect x="2" y="2" width="60" height="60" rx="12" fill="#a82012" />
        <path d="M20 17l11 7 13-7-1 16 7 14-16-1-9 11-3-16-10-10 10-4z" stroke="#f3e9e8" strokeWidth="5" strokeLinejoin="round" />
        <circle cx="48" cy="9.500" r="4.500" fill="#f3e9e8" />
      </DockIcon>
    ),
  },
  {
    name: 'JMeter',
    icon: (
      <DockIcon>
        <linearGradient id="fe" x1="1" x2="0" y2="1"><stop stopColor="#f79a23" /><stop offset=".4" stopColor="#d22c3b" /><stop offset="1" stopColor="#6d2b7e" /></linearGradient>
        <path d="M58 2c4 8 0 22-9 30l-8 5c-3-12 5-29 17-35z" fill="url(#fe)" />
        <path d="M55 8c-6 10-12 22-17 36" stroke="#5b2560" strokeWidth="1.200" />
        <text x="5" y="41" fontFamily="Open Sans" fontSize="7" fill="#8e1f3d">APACHE</text>
        <text x="1" y="59" fontFamily="Open Sans" fontWeight="bold" fontSize="20" fill="#d22128">J</text>
        <text x="8" y="57" fontFamily="Open Sans" fontWeight="bold" fontSize="19" fill="#08060b">Meter</text>
      </DockIcon>
    ),
  },
  {
    name: 'CS',
    icon: (
      <DockIcon>
        <rect width="64" height="64" rx="13" fill="#ff5c5e" />
        <path d="M32 21l-6-6c-3-4 2-7 6-2 4-5 9-2 7 2z" fill="#fff" />
        <path d="M39 27c8-4 14 2 11 9-1 3-3 4-5 4" stroke="#ffc5c5" strokeWidth="6" strokeLinecap="round" />
        <path d="M28 29c-4-6-15-3-15 5 0 7 8 9 13 5" stroke="#fff" strokeWidth="6" strokeLinecap="round" />
        <path d="M39 28c-4-4-10-2-10 2 0 5 10 6 10 14 0 9-13 10-15 1" stroke="#fff" strokeWidth="6" strokeLinecap="round" />
      </DockIcon>
    ),
  },
];

const pinned = [
  {
    name: 'Apache JMeter',
    dots: 1,
    active: true,
    icon: (
      <DockIcon>
        <clipPath id="dia"><path d="M32 2l30 30-30 30-8-8V24z" /></clipPath>
        <path d="M30 3c1-1 3-1 4 0l27 27c1 1 1 3 0 4L34 61c-1 1-3 1-4 0L3 34c-1-1-1-3 0-4z" fill="#3584e4" />
        <path d="M30 3L3 30c-1 1-1 3 0 4l19 19 6-10-3-7 4-6-2-8 4-4z" fill="#1a5fb4" />
        <g clipPath="url(#dia)" stroke="#99c1f1" strokeWidth="5">
          <circle cx="47" cy="45" r="21" strokeDasharray="4 4" />
          <circle cx="47" cy="45" r="17" />
        </g>
      </DockIcon>
    ),
  },
  {
    name: 'Trash',
    icon: (
      <DockIcon>
        <rect x="9" y="18" width="46" height="40" rx="2" fill="#2ec27e" />
        <rect x="8" y="4" width="48" height="20" rx="3" fill="#f3f2f0" />
        <path d="M10 6h44v13H10z" fill="#9a9996" />
        <path d="M13 18l10-5 10-6 8 6 9 5z" fill="#deddda" />
        <path d="M23 13l8 3 3-9M34 16l7-3" stroke="#9a9996" />
        <g stroke="#fff" strokeWidth="5">
          <path d="M27 37l4-6h4l3 5" />
          <path d="M40 40l3 6-3 4h-6" />
          <path d="M29 50h-5l-2-4 4-6" />
        </g>
      </DockIcon>
    ),
  },
  {
    name: 'Apps',
    icon: (
      <DockIcon>
        <g fill="#fff">
          {[16, 32, 48].map(y => [16, 32, 48].map(x => <circle key={`${x}-${y}`} cx={x} cy={y} r="4" />))}
        </g>
      </DockIcon>
    ),
  },
];

/* ---------- data ---------- */

const configItems = [
  { label: 'CSV Data Set Config', active: true },
  'HTTP信息头管理器', 'HTTP Cookie管理器', 'HTTP缓存管理器', 'HTTP请求默认值', null,
  'Bolt Connection Configuration', 'DNS缓存管理器', 'FTP默认请求', 'HTTP授权管理器',
  'JDBC Connection Configuration', 'Java默认请求', 'Keystore Configuration',
  'LDAP扩展请求默认值', 'LDAP默认请求', 'Random Variable', 'TCP取样器配置',
  '用户定义的变量', '登陆配置元件/素', '简单配置元件', '计数器',
];

const addItems = [
  { label: '取样器', more: true }, null,
  { label: '逻辑控制器', more: true }, null,
  { label: '前置处理器', more: true },
  { label: '后置处理器', more: true },
  { label: '断言', more: true }, null,
  { label: '定时器', more: true }, null,
  { label: '测试片段', more: true }, null,
  { label: '配置元件', more: true, active: true, items: configItems, width: 210 },
  { label: '监听器', more: true },
];

const contextItems = [
  { label: '添加', more: true, active: true, items: addItems, width: 108 }, null,
  '为子线程添加响应时间', '启动', '不停顿启动', '验证', null,
  { label: '剪切', keys: 'Ctrl-X' },
  { label: '复制', keys: 'Ctrl-C' },
  { label: '粘贴', keys: 'Ctrl-V' },
  { label: '复写', keys: 'Ctrl+Shift-C' },
  { label: '删除', keys: 'Delete' }, null,
  '打开...', '合并', '选中部分保存为...', null,
  'Copy Code',
  { label: '保存节点为图片', keys: 'Ctrl-G' },
  { label: '保存屏幕为图片', keys: 'Ctrl+Shift-G' }, null,
  { label: '启用', disabled: true },
  '禁用',
  { label: '切换', keys: 'Ctrl-T' }, null,
  '帮助',
];

const Menu = ({ items, width, root }) => (
  <MenuList $root={root} $width={width} role="menu">
    {items.map((entry, i) => {
      if (!entry) return <MenuLine key={i} role="separator" />;
      const item = typeof entry === 'string' ? { label: entry } : entry;
      return (
        <MenuItem key={item.label}>
          <MenuButton type="button" role="menuitem" disabled={item.disabled} $active={item.active} $submenu={item.more}>
            <span>{item.label}</span>
            {item.keys && <span>{item.keys}</span>}
            {item.more && (
              <svg width="6" height="10" viewBox="0 0 6 10" fill="currentColor"><path d="M0 0h1l5 5-5 5H0z" /></svg>
            )}
          </MenuButton>
          {item.items && <Menu items={item.items} width={item.width} />}
        </MenuItem>
      );
    })}
  </MenuList>
);

const Node = ({ level, icon, label, selected, open }) => (
  <TreeRow $level={level} $selected={selected}>
    <Toggle type="button" aria-label={label} disabled={open === undefined}>
      {open !== undefined && <Chevron open={open} />}
    </Toggle>
    {treeIcons[icon]}
    <span>{label}</span>
  </TreeRow>
);

const Launcher = ({ app }) => (
  <DockButton type="button" aria-label={app.name} $active={app.active}>
    {app.icon}
    {app.dots && <Dots>{Array.from({ length: app.dots }, (_, i) => <Dot key={i} />)}</Dots>}
  </DockButton>
);

const App = () => (
  <Desktop>
    <GlobalStyle />
    <Wallpaper viewBox="0 0 2560 1440" preserveAspectRatio="xMidYMid slice" fill="none" stroke="#1a1527" strokeWidth="8" aria-hidden="true">
      {waves.map((wave, i) => <path key={i} d={smooth(wave)} />)}
    </Wallpaper>

    <TopBar>
      <Workspaces>
        <Workspace type="button" aria-label="1" />
        <Workspace type="button" aria-label="2" />
        <Workspace type="button" aria-label="3" $active />
        <Workspace type="button" aria-label="4" />
      </Workspaces>
      <time>10<Han>月</Han>18<Han>日</Han> 20:29</time>
      <Tray>
        <TrayCell type="button" $wide>en</TrayCell>
        {tray.map((icon, i) => <TrayCell key={i} type="button" $wide>{icon}</TrayCell>)}
        <TrayGroup>
          {status.map((icon, i) => <TrayCell key={i} type="button">{icon}</TrayCell>)}
        </TrayGroup>
        <Battery>
          <TraySvg>
            <path d="M2 5h3V2h6v3h3v6M2 4v14h8" stroke="#fff" strokeWidth="2" />
            <path d="M5 7h6v5l-3 4H5z" fill="#fff" />
            <path d="M13 9l-4 6h3l-1 5 6-7h-3l1-4z" fill="#fff" />
          </TraySvg>
          <span>99%</span>
        </Battery>
      </Tray>
    </TopBar>

    <Window>
      <TitleBar>
        <Title>
          <Han>并发抢优惠券</Han>Jmeter<Han>测试</Han>.jmx (/home/Tomatos/Projects/IdeaProjects/dianping/<Han>并发抢优惠券</Han>Jmeter<Han>测试</Han>.jmx) - Apache JMeter (5.6.3)
        </Title>
        <WindowButtons>
          <RoundButton type="button" aria-label="最小化"><Icon><path d="M7 14h8" stroke="#fff" strokeWidth="2" /></Icon></RoundButton>
          <RoundButton type="button" aria-label="最大化"><Icon><path d="M8 8h6v6H8z" stroke="#fff" strokeWidth="2" /></Icon></RoundButton>
          <RoundButton type="button" aria-label="关闭窗口"><Icon><path d="M7.500 7.500l7 7M14.500 7.500l-7 7" stroke="#fff" strokeWidth="2" /></Icon></RoundButton>
        </WindowButtons>
      </TitleBar>

      <MenuBar>
        {['文件', '编辑', '查找', '运行', '选项', '工具', '帮助'].map(name => <button key={name} type="button">{name}</button>)}
      </MenuBar>

      <ToolBar>
        {toolGroups.map((group, i) => (
          <React.Fragment key={group[0]}>
            {i > 0 && <ToolSeparator />}
            {group.map(name => <ToolButton key={name} type="button" aria-label={name}>{toolIcons[name]}</ToolButton>)}
          </React.Fragment>
        ))}
        <Counters>
          <span>00:00:08</span>
          <Icon>
            <path d="M11 1l11 20H0z" fill="#6b5a08" />
            <path d="M11 2l9 17H2z" fill="#f7d000" stroke="#3d3300" />
            <path d="M11 7v6M11 15v2" stroke="#222" strokeWidth="2" />
          </Icon>
          <span>0</span>
          <span>0/1</span>
          <Icon>
            <circle cx="11" cy="11" r="11" fill="#bdbdbd" />
            <circle cx="11" cy="11" r="9" fill="#e2e2e2" />
            <circle cx="11" cy="11" r="5" stroke="#4c4c4c" strokeWidth="3" strokeDasharray="5 2.850" strokeDashoffset="-1.430" />
          </Icon>
        </Counters>
      </ToolBar>

      <Body>
        <Tree>
          <li>
            <Node level={0} icon="flask" label="测试计划" open />
            <Branch $level={0}>
              <li>
                <Node level={1} icon="gear" label="线程组" open selected />
                <Branch $level={1}>
                  <li><Node level={2} icon="dropper" label="HTTP请求" open={false} /></li>
                  <li><Node level={2} icon="chart" label="查看结果树" /></li>
                  <li><Node level={2} icon="chart" label="汇总报告" /></li>
                  <li><Node level={2} icon="chart" label="聚合报告" /></li>
                  <li><Node level={2} icon="tools" label="Token CSV" /></li>
                </Branch>
              </li>
            </Branch>
          </li>
        </Tree>
        <Splitter><Grip /><Grip /><Grip /></Splitter>

        <Pane>
          <PaneTitle>线程组</PaneTitle>
          <Rows $tight>
            <Row><FieldLabel $short htmlFor="name">名称：</FieldLabel><Field id="name" /></Row>
            <Row><FieldLabel $short htmlFor="comment">注释：</FieldLabel><Field id="comment" /></Row>
          </Rows>
          <Group $first>
            <Choices>
              {['继续', '启动下一进程循环', '停止线程', '停止测试', '立即停止测试'].map(label => (
                <Choice key={label}><Mark type="radio" name="on-error" />{label}</Choice>
              ))}
            </Choices>
          </Group>
          <Group>
            <Rows>
              <Row><FieldLabel htmlFor="threads">线程数：</FieldLabel><Field id="threads" /></Row>
              <Row><FieldLabel htmlFor="ramp">Ramp-Up时间（秒）：</FieldLabel><Field id="ramp" defaultValue="15" /></Row>
              <Row>
                <LoopLabel>
                  <label htmlFor="loops">循环次数</label>
                  <Choice><Mark type="checkbox" />永远</Choice>
                </LoopLabel>
                <Field id="loops" defaultValue="1" />
              </Row>
              <Choice><Mark type="checkbox" />Same user on each iteration</Choice>
              <Choice><Mark type="checkbox" />延迟创建线程直到需要</Choice>
              <Choice><Mark type="checkbox" />调度器</Choice>
              <Row><FieldLabel $disabled htmlFor="duration">持续时间 (秒)</FieldLabel><Field id="duration" disabled /></Row>
              <Row><FieldLabel $disabled htmlFor="delay">启动延迟 (秒)</FieldLabel><Field id="delay" disabled /></Row>
            </Rows>
          </Group>
        </Pane>
      </Body>

      <Menu root items={contextItems} width={246} />
      <Annotation width="225" height="150" viewBox="0 0 225 150" fill="none" aria-hidden="true">
        <rect x="6" y="112" width="213" height="33" stroke="#ed1c24" strokeWidth="2" />
        <path d="M206 5L173 81" stroke="#ed1c24" strokeWidth="5" strokeLinecap="round" />
        <path d="M163 97l-1-21 8 4 9 3z" fill="#ed1c24" />
      </Annotation>
    </Window>

    <DockBar>
      {dockApps.map(app => <Launcher key={app.name} app={app} />)}
      <DockSeparator />
      {pinned.map(app => <Launcher key={app.name} app={app} />)}
    </DockBar>
  </Desktop>
);

export default App;
